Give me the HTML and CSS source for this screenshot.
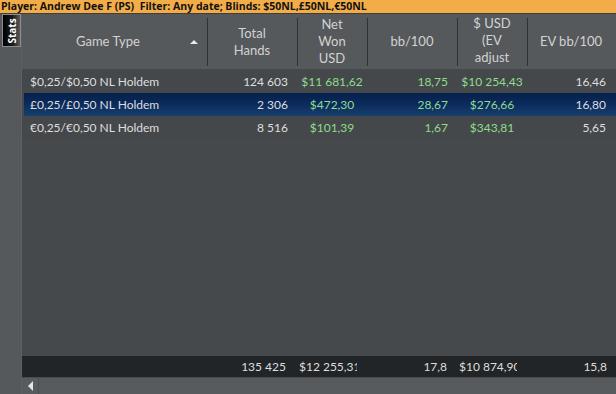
FILE: index.html
```html
<!DOCTYPE html>
<html lang="en">
<head>
    <meta charset="UTF-8">
    <title>Stats</title>
    <link rel="stylesheet" href="styles.css">
</head>
<body>
    <div class="filter-bar">Player: Andrew Dee F (PS)&nbsp;&nbsp;Filter: Any date; Blinds: $50NL,£50NL,€50NL</div>
    <div class="main">
        <div class="sidebar">
            <div class="tab"><span>Stats</span></div>
        </div>
        <div class="grid">
            <div class="head">
                <div class="hcell c1">Game Type<span class="sort"></span></div>
                <div class="hcell c2">Total<br>Hands</div>
                <div class="hcell c3">Net<br>Won<br>USD</div>
                <div class="hcell c4">bb/100</div>
                <div class="hcell c5">$ USD<br>(EV<br>adjust</div>
                <div class="hcell c6">EV bb/100</div>
            </div>
            <div class="body">
                <div class="row">
                    <div class="cell c1 left">$0,25/$0,50 NL Holdem</div>
                    <div class="cell c2 right">124 603</div>
                    <div class="cell c3 center green">$11 681,62</div>
                    <div class="cell c4 right green">18,75</div>
                    <div class="cell c5 center green">$10 254,43</div>
                    <div class="cell c6 right">16,46</div>
                </div>
                <div class="row selected">
                    <div class="cell c1 left">£0,25/£0,50 NL Holdem</div>
                    <div class="cell c2 right">2 306</div>
                    <div class="cell c3 center green">$472,30</div>
                    <div class="cell c4 right green">28,67</div>
                    <div class="cell c5 center green">$276,66</div>
                    <div class="cell c6 right">16,80</div>
                </div>
                <div class="row">
                    <div class="cell c1 left">€0,25/€0,50 NL Holdem</div>
                    <div class="cell c2 right">8 516</div>
                    <div class="cell c3 center green">$101,39</div>
                    <div class="cell c4 right green">1,67</div>
                    <div class="cell c5 center green">$343,81</div>
                    <div class="cell c6 right">5,65</div>
                </div>
            </div>
            <div class="row totals">
                <div class="cell c1"></div>
                <div class="cell c2 right">135 425</div>
                <div class="cell c3"><span class="clip">$12 255,31</span></div>
                <div class="cell c4 right">17,8</div>
                <div class="cell c5"><span class="clip">$10 874,90</span></div>
                <div class="cell c6 right">15,8</div>
            </div>
            <div class="hscroll">
                <div class="arrow-btn"><span class="arrow"></span></div>
                <div class="track"></div>
            </div>
        </div>
    </div>
</body>
</html>
```

FILE: styles.css
```css
html, body {
    margin: 0;
    padding: 0;
    height: 100%;
}
body {
    width: 616px;
    height: 394px;
    overflow: hidden;
    display: flex;
    flex-direction: column;
    background: #56595c;
    font-family: Lato, "Open Sans", sans-serif;
    font-size: 13px;
    color: #dcdcdc;
}
.filter-bar {
    height: 13px;
    line-height: 13px;
    background: #f3ad48;
    color: #111;
    font-family: "Open Sans", sans-serif;
    font-weight: bold;
    font-size: 10.5px;
    padding-left: 1px;
    border-bottom: 1px solid #3c3e40;
    white-space: nowrap;
    letter-spacing: 0;
}
.main {
    flex: 1;
    display: flex;
    min-height: 0;
}
.sidebar {
    width: 22px;
    background: #56595c;
    border-right: 1px solid #5c5f62;
    box-sizing: border-box;
}
.tab {
    margin: 0 0 0 2px;
    width: 19px;
    height: 33px;
    box-sizing: border-box;
    border: 1px solid #8a8c8e;
    background: linear-gradient(to right, #000 0%, #1a1a1a 55%, #5a5a5a 100%);
    display: flex;
    align-items: center;
    justify-content: center;
}
.tab span {
    transform: rotate(-90deg);
    color: #fff;
    font-family: "Open Sans", sans-serif;
    font-weight: bold;
    font-size: 10px;
    white-space: nowrap;
}
.grid {
    flex: 1;
    display: flex;
    flex-direction: column;
    background: #46494c;
}
.c1 { width: 185px; }
.c2 { width: 90px; }
.c3 { width: 70px; }
.c4 { width: 90px; }
.c5 { width: 70px; }
.c6 { width: 88px; }
.head {
    display: flex;
    height: 55px;
    background: #56595c;
}
.hcell {
    box-sizing: border-box;
    display: flex;
    align-items: center;
    justify-content: center;
    text-align: center;
    line-height: 17px;
    color: #d2d2d2;
    position: relative;
}
.hcell + .hcell::before {
    content: '';
    position: absolute;
    left: 0;
    top: 4px;
    bottom: 3px;
    width: 1px;
    background: #2f3133;
}
.hcell.c1 {
    justify-content: flex-start;
    padding-left: 54px;
}
.hcell.c5 {
    align-items: flex-start;
    padding-top: 1px;
}
.sort {
    position: absolute;
    right: 9px;
    top: 26px;
    width: 0;
    height: 0;
    border-left: 4px solid transparent;
    border-right: 4px solid transparent;
    border-bottom: 4px solid #e8e8e8;
}
.body {
    flex: 1;
    padding-top: 1px;
    background: #46494c;
}
.row {
    display: flex;
    height: 23px;
    line-height: 23px;
    background: #45484b;
    font-size: 12px;
}
.row.selected {
    margin-left: 2px;
    background: linear-gradient(to bottom, #04204c 0%, #0c2b5c 50%, #17406f 100%);
}
.row.selected .c1 {
    width: 183px;
    padding-left: 6px;
}
.cell {
    box-sizing: border-box;
    white-space: nowrap;
    color: #dedede;
}
.left { padding-left: 8px; }
.right { text-align: right; padding-right: 9px; }
.center { text-align: center; }
.green { color: #8fdc8a; }
.row.totals {
    height: 21px;
    line-height: 21px;
    background: #222527;
}
.row.totals .c3,
.row.totals .c5 {
    padding-left: 2px;
}
.clip {
    display: block;
    width: 58px;
    overflow: hidden;
}
.row.totals .c2 { padding-right: 11px; }
.row.totals .c4 { padding-right: 10px; }
.row.totals .c6 { padding-right: 8px; }
.hscroll {
    height: 16px;
    display: flex;
    background: #585b5e;
    border-top: 1px solid #4a4d50;
}
.arrow-btn {
    width: 16px;
    border-right: 1px solid #4b4e51;
    display: flex;
    align-items: center;
    justify-content: center;
}
.arrow {
    width: 0;
    height: 0;
    border-top: 5px solid transparent;
    border-bottom: 5px solid transparent;
    border-right: 5px solid #e6e6e6;
}
.track {
    flex: 1;
}
```
